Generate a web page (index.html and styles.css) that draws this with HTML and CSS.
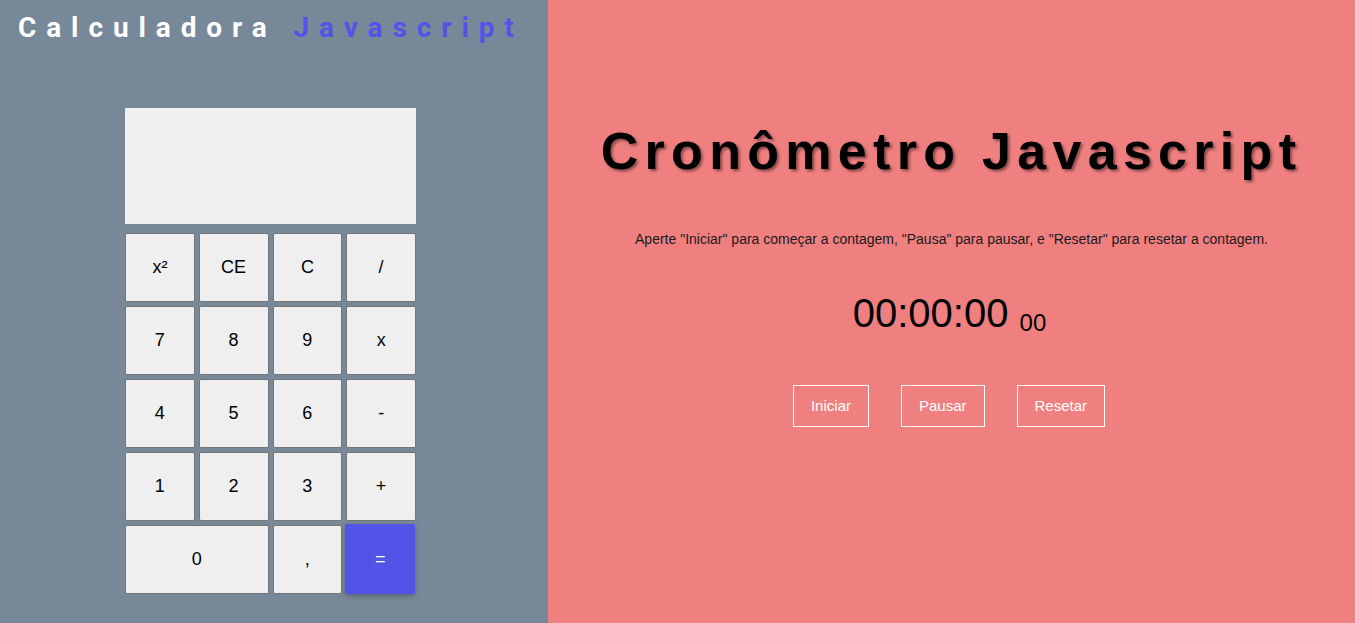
FILE: index.html
```html
<!DOCTYPE html>
<html lang="pt-BR">
<head>
<meta charset="utf-8">
<title>Calculadora e Cronômetro</title>
<link rel="stylesheet" href="styles.css">
</head>
<body>
<div class="page">
  <section class="calc-panel">
    <h1 class="calc-title">Calculadora <span class="accent">Javascript</span></h1>
    <div class="calculator">
      <div class="display"></div>
      <div class="keys">
        <button class="key">x²</button>
        <button class="key">CE</button>
        <button class="key">C</button>
        <button class="key">/</button>
        <button class="key">7</button>
        <button class="key">8</button>
        <button class="key">9</button>
        <button class="key">x</button>
        <button class="key">4</button>
        <button class="key">5</button>
        <button class="key">6</button>
        <button class="key">-</button>
        <button class="key">1</button>
        <button class="key">2</button>
        <button class="key">3</button>
        <button class="key">+</button>
        <button class="key key-zero">0</button>
        <button class="key">,</button>
        <button class="key key-equals">=</button>
      </div>
    </div>
  </section>
  <section class="timer-panel">
    <h2 class="timer-title">Cronômetro Javascript</h2>
    <p class="timer-help">Aperte "Iniciar" para começar a contagem, "Pausa" para pausar, e "Resetar" para resetar a contagem.</p>
    <div class="timer-display">00:00:00 <span class="timer-ms">00</span></div>
    <div class="timer-actions">
      <button class="timer-btn">Iniciar</button>
      <button class="timer-btn">Pausar</button>
      <button class="timer-btn">Resetar</button>
    </div>
  </section>
</div>
</body>
</html>
```

FILE: styles.css
```css
* { box-sizing: border-box; }

html, body {
  margin: 0;
  padding: 0;
  height: 100%;
}

body {
  font-family: "Liberation Sans", Arial, sans-serif;
  overflow: hidden;
}

.page {
  display: flex;
  height: 623px;
}

.calc-panel {
  width: 548px;
  flex: none;
  background: #778899;
}

.calc-title {
  margin: 0;
  padding: 11px 0 0 18px;
  font-family: Roboto, "Liberation Sans", sans-serif;
  font-weight: 700;
  font-size: 28px;
  line-height: 34px;
  letter-spacing: 9.9px;
  color: #ffffff;
  white-space: nowrap;
}

.accent {
  color: #5254e8;
}

.calculator {
  width: 291px;
  margin: 63px 0 0 125px;
}

.display {
  height: 116px;
  background: #f0f0f0;
  margin-bottom: 9px;
}

.keys {
  display: grid;
  grid-template-columns: repeat(4, 1fr);
  grid-auto-rows: 69px;
  gap: 4px;
}

.key {
  margin: 0;
  padding: 0;
  background: #efefef;
  border: 1px solid #767676;
  border-radius: 2px;
  font-family: "Liberation Sans", Arial, sans-serif;
  font-size: 18px;
  color: #000000;
}

.key-zero {
  grid-column: span 2;
}

.key-equals {
  width: 70px;
  height: 70px;
  margin: -1px 0 0 -1px;
  background: #5254e8;
  color: #ffffff;
  border: none;
  border-radius: 0;
  box-shadow: 0 2px 5px rgba(0, 0, 0, 0.25);
}

.timer-panel {
  flex: 1;
  background: #f08080;
  padding-top: 121px;
  text-align: center;
}

.timer-title {
  margin: 0;
  font-family: "Liberation Sans", Arial, sans-serif;
  font-weight: 700;
  font-size: 52px;
  line-height: 60px;
  letter-spacing: 6.3px;
  color: #000000;
  text-shadow: 2px 2px 3px rgba(0, 0, 0, 0.45);
  white-space: nowrap;
}

.timer-help {
  margin: 50px 0 0;
  font-size: 14px;
  line-height: 16px;
  color: #1a1a1a;
}

.timer-display {
  margin-top: 43px;
  padding-right: 4px;
  font-size: 40px;
  line-height: 46px;
  color: #000000;
}

.timer-ms {
  font-size: 24px;
  line-height: 24px;
  vertical-align: -4px;
}

.timer-actions {
  margin-top: 49px;
  padding-right: 5px;
  display: flex;
  justify-content: center;
  gap: 32px;
}

.timer-btn {
  margin: 0;
  padding: 11px 17px;
  background: transparent;
  border: 1px solid #ffffff;
  border-radius: 0;
  font-family: "Liberation Sans", Arial, sans-serif;
  font-size: 15px;
  line-height: 18px;
  color: #ffffff;
}
```
